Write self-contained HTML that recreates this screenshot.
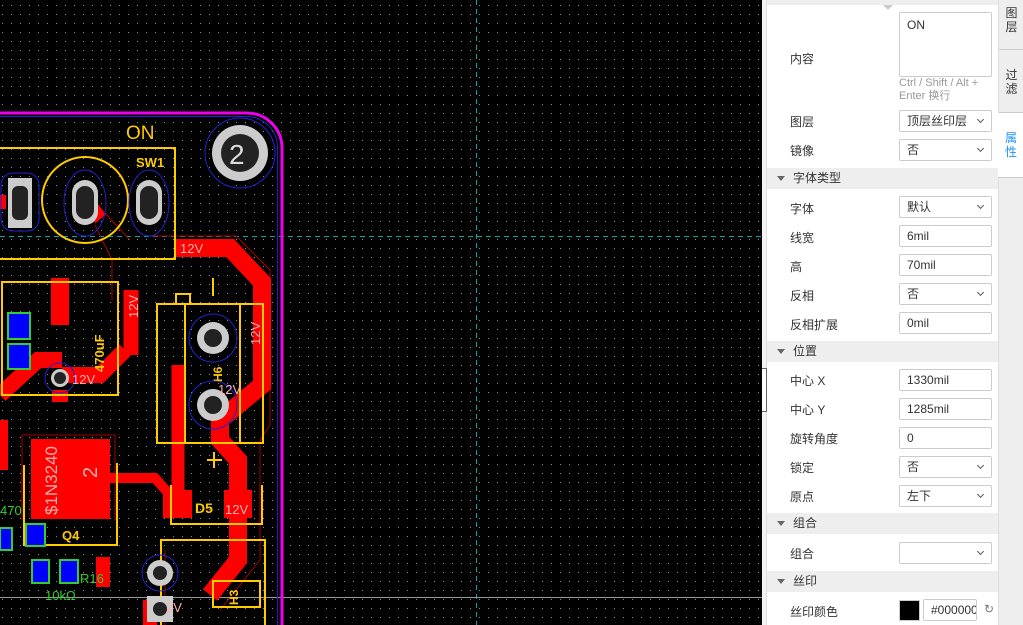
<!DOCTYPE html>
<html><head><meta charset="utf-8"><style>
*{margin:0;padding:0;box-sizing:border-box}
body{width:1023px;height:625px;overflow:hidden;background:#000;font-family:"Liberation Sans","Noto Sans CJK SC",sans-serif;position:relative}
#pcb{position:absolute;left:0;top:0}
#panel{position:absolute;left:762px;top:0;width:261px;height:625px;background:#fff;font-size:12px;color:#333}
.bd{position:absolute;left:0;top:0;width:5px;height:625px;background:#f3f3f3;border-right:1px solid #ddd}
.top{position:absolute;left:5px;top:0;width:231px;height:5px;background:#eee}
.tabs{position:absolute;left:236px;top:0;width:25px;height:625px;background:#eee;border-left:1px solid #ddd}
.tab{position:absolute;left:0;width:25px;font-size:12px;line-height:14px;text-align:center;color:#333;border-bottom:1px solid #ccc;padding-top:6px}
.lab{position:absolute;left:28px;font-size:12px}
.inp{position:absolute;left:137px;width:93px;height:22px;border:1px solid #ccc;border-radius:2px;font-size:12px;line-height:20px;padding-left:7px;color:#333;background:#fff}
.sel:after{content:"";position:absolute;right:8px;top:6px;width:4px;height:4px;border-right:1px solid #555;border-bottom:1px solid #555;transform:rotate(45deg)}
.hd{position:absolute;left:5px;width:231px;height:21px;background:#eee;font-size:12px;line-height:21px;padding-left:26px}
.hd:before{content:"";position:absolute;left:10px;top:8px;border-left:4px solid transparent;border-right:4px solid transparent;border-top:5px solid #666}
</style></head><body>
<svg id="pcb" width="762" height="625" viewBox="0 0 762 625">
<defs><pattern id="g" x="2" y="5" width="9" height="9" patternUnits="userSpaceOnUse"><rect x="0" y="0" width="1" height="1" fill="#8a8a8a"/></pattern></defs>
<rect width="762" height="625" fill="#000"/>
<rect width="762" height="625" fill="url(#g)"/>
<line x1="476.5" y1="0" x2="476.5" y2="625" stroke="#0aa" stroke-dasharray="5,4"/>
<line x1="0" y1="236.5" x2="762" y2="236.5" stroke="#0aa" stroke-dasharray="5,4"/>
<line x1="0" y1="597.5" x2="762" y2="597.5" stroke="#999"/>
<path d="M0 113 H247 A35 35 0 0 1 282 148 V625" fill="none" stroke="#e0e" stroke-width="3"/>
<path d="M0 116.5 H246 A31 31 0 0 1 277.5 148 V625" fill="none" stroke="#22c" stroke-width="1"/>
<path d="M150 236 H236 L270 270 V425 L260 440 V560 L220 610" fill="none" stroke="#a00" stroke-width="1"/>
<path d="M165 550 V625" fill="none" stroke="#a00"/>
<path d="M22 435 V520 M22 435 H115 V520" fill="none" stroke="#a00"/>
<path d="M175 248 H230 L262 282 V385 L220 420 V440 L238 460 V560 L210 595" fill="none" stroke="#f00" stroke-width="18" stroke-linejoin="miter"/>
<path d="M178 365 V505" stroke="#f00" stroke-width="13"/>
<path d="M0 395 L38 360 H62" fill="none" stroke="#f00" stroke-width="16"/>
<path d="M62 375 H100 L125 350" fill="none" stroke="#f00" stroke-width="16"/>
<path d="M131 290 V355" stroke="#f00" stroke-width="15"/>
<path d="M2 420 V470" stroke="#f00" stroke-width="12"/>
<path d="M110 478 H155 L170 495" fill="none" stroke="#f00" stroke-width="10"/>
<path d="M150 600 V625" stroke="#f00" stroke-width="14"/>
<rect x="51" y="278" width="18" height="47" fill="#f00"/>
<rect x="52" y="390" width="16" height="12" fill="#f00"/>
<rect x="31" y="439" width="79" height="80" fill="#f00"/>
<rect x="163" y="490" width="29" height="28" fill="#f00"/>
<rect x="224" y="490" width="28" height="28" fill="#f00"/>
<rect x="96" y="557" width="14" height="30" fill="#f00"/>
<rect x="0" y="195" width="6" height="14" fill="#f00"/>
<rect x="90" y="208" width="14" height="12" fill="#f00" transform="rotate(-40 97 214)"/>
<path d="M102 210 L130 240 M95 225 L112 260 V300" fill="none" stroke="#a00"/>
<g fill="none" stroke="#fc0" stroke-width="2">
<rect x="-5" y="148" width="180" height="111"/>
<circle cx="85" cy="200" r="43"/>
<rect x="2" y="282" width="116" height="113"/>
<rect x="157" y="304" width="106" height="139"/>
<line x1="185" y1="304" x2="185" y2="443"/><line x1="240" y1="304" x2="240" y2="443"/>
<rect x="176" y="294" width="14" height="10"/>
<line x1="213" y1="278" x2="213" y2="296"/>
<path d="M207 460 H222 M214 452 V468"/>
<path d="M24 465 V545 H117 V463"/>
<path d="M171 485 V524 H262 V485"/>
<path d="M161 625 V540 H265 V625"/>
<rect x="213" y="581" width="47" height="26"/>
</g>
<g font-family="Liberation Sans,sans-serif" fill="#fc0">
<text x="126" y="139" font-size="19">ON</text>
<text x="136" y="167" font-size="13" font-weight="bold">SW1</text>
<text x="195" y="513" font-size="14" font-weight="bold">D5</text>
<text x="62" y="540" font-size="13" font-weight="bold">Q4</text>
<text x="0" y="0" font-size="13" font-weight="bold" transform="translate(104,372) rotate(-90)">470uF</text>
<text x="0" y="0" font-size="12" font-weight="bold" transform="translate(222,382) rotate(-90)">H6</text>
<text x="0" y="0" font-size="12" font-weight="bold" transform="translate(238,605) rotate(-90)">H3</text>
</g>
<g stroke="#22c" fill="none"><ellipse cx="85" cy="203" rx="21" ry="33"/><ellipse cx="149" cy="203" rx="20" ry="33"/><rect x="1" y="173" width="38" height="58" rx="12"/><circle cx="240" cy="153" r="35"/><circle cx="213" cy="338" r="24"/><circle cx="213" cy="405" r="24"/><circle cx="160" cy="573" r="18"/><circle cx="60" cy="378" r="15"/></g>
<g fill="#ccc"><rect x="72" y="180" width="26" height="45" rx="13"/><rect x="136" y="180" width="26" height="45" rx="13"/><rect x="8" y="178" width="24" height="50"/><circle cx="240" cy="153" r="28"/><circle cx="213" cy="338" r="16"/><circle cx="213" cy="405" r="16"/><circle cx="160" cy="573" r="13"/><rect x="147" y="596" width="26" height="26"/><circle cx="40" cy="571" r="8"/><circle cx="60" cy="378" r="9"/></g>
<g fill="#222"><rect x="76" y="186" width="18" height="33" rx="9"/><rect x="140" y="186" width="18" height="33" rx="9"/><rect x="12" y="186" width="16" height="34" rx="6"/><circle cx="240" cy="153" r="19"/><circle cx="213" cy="338" r="9"/><circle cx="213" cy="405" r="9"/><circle cx="160" cy="573" r="7"/><circle cx="160" cy="609" r="7"/><circle cx="60" cy="378" r="6"/></g>
<text x="229" y="164" font-size="28" fill="#ddd" font-family="Liberation Sans,sans-serif">2</text>
<g fill="#00f" stroke="#3c3" stroke-width="2"><rect x="8" y="313" width="22" height="26"/><rect x="8" y="344" width="22" height="25"/><rect x="26" y="524" width="19" height="22"/><rect x="32" y="560" width="17" height="23"/><rect x="60" y="560" width="18" height="23"/><rect x="0" y="528" width="12" height="22"/></g>
<g font-family="Liberation Sans,sans-serif" fill="#ffb0b0" font-size="13">
<text x="180" y="253">12V</text><text x="218" y="394">12V</text><text x="72" y="384">12V</text><text x="225" y="514">12V</text><text x="166" y="612">2V</text>
<text x="0" y="0" transform="translate(138,318) rotate(-90)">12V</text>
<text x="0" y="0" transform="translate(260,345) rotate(-90)">12V</text>
<text x="0" y="0" transform="translate(57,515) rotate(-90)" font-size="17">$1N3240</text>
<text x="0" y="0" transform="translate(97,478) rotate(-90)" font-size="20">2</text>
</g>
<g font-family="Liberation Sans,sans-serif" fill="#3c3" font-size="13"><text x="80" y="583">R16</text><text x="45" y="600">10kΩ</text><text x="0" y="515">470</text></g>
</svg>
<div id="panel">
<div class="bd"></div><div class="top"></div>
<div style="position:absolute;left:121px;top:5px;border-left:5px solid transparent;border-right:5px solid transparent;border-top:5px solid #ccc"></div>
<div class="lab" style="top:50px">内容</div>
<div class="inp" style="top:12px;height:65px;line-height:24px">ON</div>
<div style="position:absolute;left:137px;top:77px;font-size:11px;line-height:13px;color:#999;width:95px">Ctrl / Shift / Alt + Enter 换行</div>
<div class="lab" style="top:113px">图层</div><div class="inp sel" style="top:110px">顶层丝印层</div>
<div class="lab" style="top:142px">镜像</div><div class="inp sel" style="top:139px">否</div>
<div class="hd" style="top:168px">字体类型</div>
<div class="lab" style="top:200px">字体</div><div class="inp sel" style="top:196px">默认</div>
<div class="lab" style="top:229px">线宽</div><div class="inp" style="top:225px">6mil</div>
<div class="lab" style="top:258px">高</div><div class="inp" style="top:254px">70mil</div>
<div class="lab" style="top:287px">反相</div><div class="inp sel" style="top:283px">否</div>
<div class="lab" style="top:316px">反相扩展</div><div class="inp" style="top:312px">0mil</div>
<div class="hd" style="top:341px">位置</div>
<div class="lab" style="top:372px">中心 X</div><div class="inp" style="top:369px">1330mil</div>
<div class="lab" style="top:401px">中心 Y</div><div class="inp" style="top:398px">1285mil</div>
<div class="lab" style="top:430px">旋转角度</div><div class="inp" style="top:427px">0</div>
<div class="lab" style="top:459px">锁定</div><div class="inp sel" style="top:456px">否</div>
<div class="lab" style="top:488px">原点</div><div class="inp sel" style="top:485px">左下</div>
<div class="hd" style="top:513px">组合</div>
<div class="lab" style="top:545px">组合</div><div class="inp sel" style="top:542px"></div>
<div class="hd" style="top:571px">丝印</div>
<div class="lab" style="top:603px">丝印颜色</div>
<div style="position:absolute;left:137px;top:600px;width:21px;height:21px;background:#000;border:1px solid #ccc"></div>
<div class="inp" style="left:161px;top:599px;width:54px;overflow:hidden;white-space:nowrap">#000000</div>
<div style="position:absolute;left:222px;top:602px;font-size:12px;color:#777">↻</div>
<div style="position:absolute;left:0;top:368px;width:5px;height:44px;border:1px solid #666;border-left:none;background:#fff"></div>
<div class="tabs">
<div class="tab" style="top:0;height:50px">图<br>层</div>
<div class="tab" style="top:50px;height:63px;padding-top:18px">过<br>滤</div>
<div class="tab" style="top:113px;height:65px;padding-top:18px;background:#fff;color:#1e90ff;margin-left:-1px;width:26px">属<br>性</div>
</div>
</div>
</body></html>
